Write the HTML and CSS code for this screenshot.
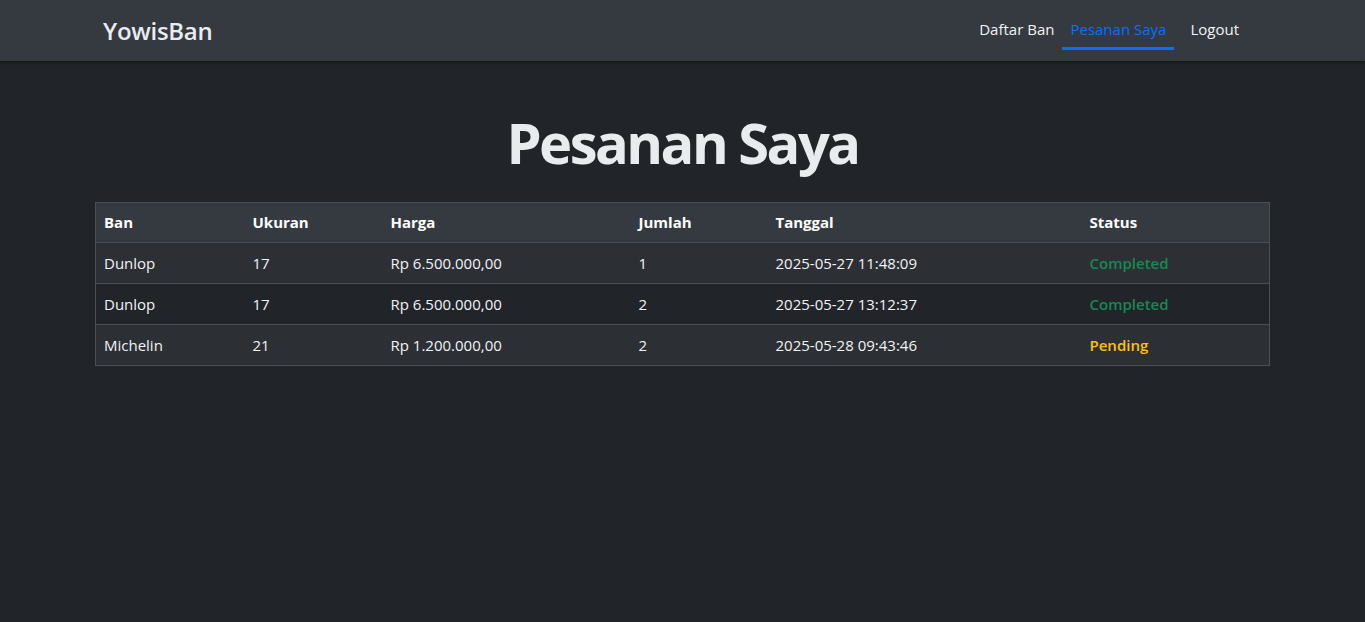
FILE: index.html
```html
<!DOCTYPE html>
<html lang="id">
<head>
<meta charset="utf-8">
<title>Pesanan Saya - YowisBan</title>
<link rel="stylesheet" href="styles.css">
</head>
<body>
<nav class="navbar">
  <div class="nav-inner">
    <a class="brand" href="#">YowisBan</a>
    <ul class="nav-links">
      <li><a class="nav-link" href="#">Daftar Ban</a></li>
      <li><a class="nav-link active" href="#">Pesanan Saya</a></li>
      <li><a class="nav-link" href="#">Logout</a></li>
    </ul>
  </div>
</nav>
<main class="content">
  <h1 class="title">Pesanan Saya</h1>
  <table class="orders">
    <colgroup>
      <col class="c1"><col class="c2"><col class="c3"><col class="c4"><col class="c5"><col class="c6">
    </colgroup>
    <thead>
      <tr><th>Ban</th><th>Ukuran</th><th>Harga</th><th>Jumlah</th><th>Tanggal</th><th>Status</th></tr>
    </thead>
    <tbody>
      <tr class="odd"><td>Dunlop</td><td>17</td><td>Rp 6.500.000,00</td><td>1</td><td>2025-05-27 11:48:09</td><td class="st completed">Completed</td></tr>
      <tr><td>Dunlop</td><td>17</td><td>Rp 6.500.000,00</td><td>2</td><td>2025-05-27 13:12:37</td><td class="st completed">Completed</td></tr>
      <tr class="odd"><td>Michelin</td><td>21</td><td>Rp 1.200.000,00</td><td>2</td><td>2025-05-28 09:43:46</td><td class="st pending">Pending</td></tr>
    </tbody>
  </table>
</main>
</body>
</html>
```
FILE: styles.css
```css
* { box-sizing: border-box; }
html, body { margin: 0; padding: 0; }
body {
  background: #212529;
  color: #dee2e6;
  font-family: "Open Sans", "Noto Sans", sans-serif;
  font-size: 15px;
  line-height: 1.5;
  min-height: 622px;
}
.navbar {
  background: #343a40;
  height: 61px;
  box-shadow: 0 2px 3px rgba(0,0,0,0.35);
  position: relative;
}
.nav-inner {
  height: 61px;
  display: flex;
  align-items: center;
  justify-content: space-between;
  padding: 0 118px 0 103px;
}
.brand {
  color: #e9ecef;
  text-decoration: none;
  font-size: 24px;
  font-weight: 600;
  letter-spacing: -0.3px;
  margin-top: 1px;
}
.nav-links {
  list-style: none;
  display: flex;
  margin: 0;
  padding: 0;
  align-self: flex-start;
  align-items: flex-start;
}
.nav-links li { display: flex; }
.nav-link {
  display: flex;
  align-items: flex-end;
  padding: 0 8px 7px;
  color: #f1f3f5;
  text-decoration: none;
  border-bottom: 3px solid transparent;
  height: 50px;
}
.nav-link.active {
  color: #0d6efd;
  border-bottom-color: #0d6efd;
  margin-right: 8px;
}
.content {
  padding: 0 95px;
}
.title {
  margin: 52px 0 0;
  text-align: center;
  font-size: 56px;
  font-weight: 700;
  color: #e9ecef;
  line-height: 58px;
  letter-spacing: -2.5px;
  padding-bottom: 31px;
}
.orders {
  width: 100%;
  border-collapse: collapse;
  border: 1px solid #495057;
  table-layout: fixed;
}
.c1 { width: 149px; }
.c2 { width: 138px; }
.c3 { width: 248px; }
.c4 { width: 137px; }
.c5 { width: 314px; }
.c6 { width: auto; }
.orders th, .orders td {
  text-align: left;
  padding: 0 8px;
  height: 41px;
  border-bottom: 1px solid #495057;
}
.orders th {
  background: #343a40;
  font-weight: 700;
  color: #fff;
  height: 40px;
}
.orders tbody tr { background: #212529; }
.orders tbody tr.odd { background: #2c3034; }
.orders td { color: #f1f3f5; }
.st { font-weight: 600; }
.completed { color: #198754 !important; }
.pending { color: #ffc107 !important; }
```
